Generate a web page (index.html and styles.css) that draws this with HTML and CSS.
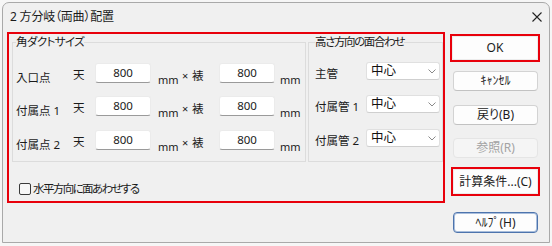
FILE: index.html
```html
<!DOCTYPE html>
<html lang="ja">
<head>
<meta charset="utf-8">
<title>2 方分岐（両曲）配置</title>
<link rel="stylesheet" href="styles.css">
</head>
<body>
<div class="window">
  <div class="titlebar">
    <span class="title">2 方分岐（両曲）配置</span>
    <svg class="close" width="10" height="10" viewBox="0 0 10 10"><path d="M0.5 0.5 L9.5 9.5 M9.5 0.5 L0.5 9.5" stroke="#222" stroke-width="1.1" fill="none"/></svg>
  </div>
  <div class="body">
    <div class="main">
      <div class="groups">
        <fieldset class="group g1">
          <legend class="leg1">角ダクトサイズ</legend>
          <div class="rows">
            <div class="row">
              <span class="lbl">入口点</span><span class="ten">天</span><span class="input">800</span><span class="mm mm1">mm</span><span class="times">×</span><span class="ura">裱</span><span class="input">800</span><span class="mm mm2">mm</span>
            </div>
            <div class="row">
              <span class="lbl">付属点 1</span><span class="ten">天</span><span class="input">800</span><span class="mm mm1">mm</span><span class="times">×</span><span class="ura">裱</span><span class="input">800</span><span class="mm mm2">mm</span>
            </div>
            <div class="row">
              <span class="lbl">付属点 2</span><span class="ten">天</span><span class="input">800</span><span class="mm mm1">mm</span><span class="times">×</span><span class="ura">裱</span><span class="input">800</span><span class="mm mm2">mm</span>
            </div>
          </div>
        </fieldset>
        <fieldset class="group g2">
          <legend class="leg2">高さ方向の面合わせ</legend>
          <div class="rows">
            <div class="row">
              <span class="lbl2">主管</span><span class="select"><span>中心</span><svg width="8" height="5" viewBox="0 0 8 5"><path d="M0.5 0.5 L4 4 L7.5 0.5" stroke="#8a8a8a" fill="none"/></svg></span>
            </div>
            <div class="row">
              <span class="lbl2">付属管 1</span><span class="select"><span>中心</span><svg width="8" height="5" viewBox="0 0 8 5"><path d="M0.5 0.5 L4 4 L7.5 0.5" stroke="#8a8a8a" fill="none"/></svg></span>
            </div>
            <div class="row">
              <span class="lbl2">付属管 2</span><span class="select"><span>中心</span><svg width="8" height="5" viewBox="0 0 8 5"><path d="M0.5 0.5 L4 4 L7.5 0.5" stroke="#8a8a8a" fill="none"/></svg></span>
            </div>
          </div>
        </fieldset>
      </div>
      <div class="check"><span class="box"></span><span class="checklbl">水平方向に面あわせする</span></div>
    </div>
    <div class="buttons">
      <div class="hl okbox"><div class="btn fill">OK</div></div>
      <div class="btn cancel">ｷｬﾝｾﾙ</div>
      <div class="btn back">戻り(B)</div>
      <div class="btn ref disabled">参照(R)</div>
      <div class="hl calcbox"><div class="btn fill">計算条件...(C)</div></div>
      <div class="btn help">ﾍﾙﾌﾟ(H)</div>
    </div>
  </div>
</div>
</body>
</html>
```

FILE: styles.css
```css
* { box-sizing: border-box; }
body {
  margin: 0;
  background: #f6f6f6;
  font-family: "Noto Sans", "Noto Sans CJK JP", sans-serif;
  font-size: 11.5px;
  color: #1b1b1b;
  font-feature-settings: "palt";
}
.window {
  margin: 2px 0 0 2px;
  width: 548px;
  height: 241px;
  background: #f0f0f0;
  border: 1px solid #a9a9a9;
  border-radius: 7px 7px 0 0;
}
.titlebar {
  height: 27px;
  display: flex;
  align-items: center;
  justify-content: space-between;
  padding: 0 7px 0 7px;
}
.title { font-size: 12px; line-height: 16px; letter-spacing: -0.2px; }
.body {
  display: flex;
  padding-left: 4px;
  margin-top: 2px;
}
.main {
  width: 438px;
  height: 171px;
  border: 2px solid #e8000b;
  display: flex;
  flex-direction: column;
}
.hl { border: 2px solid #e8000b; }
.groups {
  display: flex;
  padding-left: 3px;
  gap: 2px;
}
.group {
  margin: 0;
  min-width: 0;
  height: 128px;
  border: 1px solid #dcdcdc;
  padding: 7px 0 0 3px;
}
.g1 { width: 294px; }
.g2 { width: 135px; padding-left: 6px; }
legend {
  padding: 0;
  line-height: 16px;
  font-size: 11.5px;
}
.leg1 { letter-spacing: -0.6px; }
.leg2 { letter-spacing: -1.4px; }
.rows {
  display: grid;
  grid-template-rows: 33px 34px 34px;
}
.row {
  display: flex;
  align-items: flex-start;
  line-height: 16px;
}
.lbl { width: 57px; margin-top: 13px; }
.ten { width: 22px; margin-top: 10px; }
.input {
  width: 56px;
  height: 20px;
  margin-top: 6px;
  background: #fff;
  border: 1px solid #ebebeb;
  border-bottom: 1px solid #9a9a9a;
  border-radius: 3px;
  font-size: 11.5px;
  line-height: 18px;
  text-align: center;
}
.mm { font-size: 11px; margin-top: 15px; }
.mm1 { width: 24px; margin-left: 7px; }
.mm2 { margin-left: 5px; }
.times { width: 10px; margin-top: 11px; font-size: 11px; }
.ura { width: 27px; margin-top: 11px; }
.lbl2 { width: 51px; margin-top: 9px; }
.select {
  width: 74px;
  height: 18px;
  margin-top: 5px;
  background: #fff;
  border: 1px solid #e0e0e0;
  border-bottom-color: #cfcfcf;
  border-radius: 3px;
  display: flex;
  align-items: center;
  justify-content: space-between;
  padding: 0 3px 0 4px;
  font-size: 12.5px;
  color: #111;
}
.check {
  display: flex;
  align-items: center;
  gap: 2px;
  margin: 19px 0 0 10px;
  line-height: 16px;
}
.checklbl { letter-spacing: -1.6px; }
.box {
  width: 12px;
  height: 12px;
  border: 1px solid #3a3a3a;
  border-radius: 2px;
  background: #f7f7f7;
}
.buttons {
  width: 90px;
  margin-left: 5px;
  display: flex;
  flex-direction: column;
}
.btn {
  width: 85px;
  height: 20px;
  margin-left: 3px;
  background: #fdfdfd;
  border: 1px solid #d3d3d3;
  border-bottom-color: #c2c2c2;
  border-radius: 4px;
  display: flex;
  align-items: center;
  justify-content: center;
  font-size: 12px;
  line-height: 16px;
}
.okbox {
  margin-top: 2px;
  height: 28px;
  width: 90px;
  display: flex;
}
.btn.fill {
  margin: 0;
  width: 100%;
  height: 100%;
  border-radius: 2px;
  border-color: #ececec;
}
.cancel { margin-top: 9px; }
.back { margin-top: 14px; }
.ref { margin-top: 13px; }
.disabled {
  background: #f5f5f5;
  border-color: #e5e5e5;
  color: #a3a3a3;
}
.calcbox {
  margin-top: 9px;
  margin-left: 1px;
  width: 89px;
  height: 29px;
  display: flex;
}
.help {
  margin-top: 16px;
  height: 21px;
  border: 1px solid #4d74ad;
  box-shadow: inset 0 0 0 1px #a9bedc;
}
```
